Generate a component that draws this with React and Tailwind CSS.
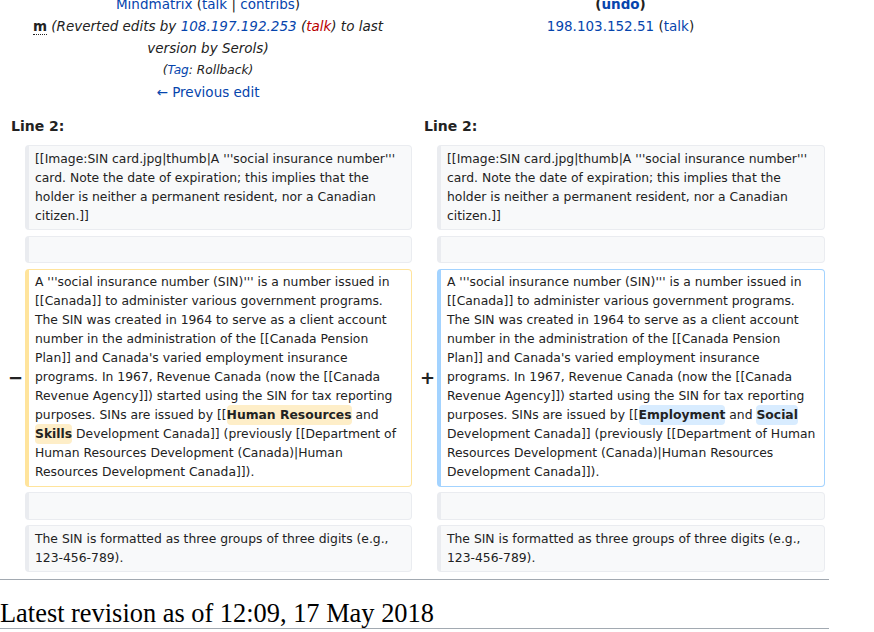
export default function App() {
  const link = "text-[#0645ad]";
  const ctx = "rounded-[4px] border border-l-4 border-[#eaecf0] bg-[#f8f9fa] px-[6px] py-[3.5px] min-h-[27.5px]";
  const del = "rounded-[4px] border border-l-4 border-[#ffe49c] bg-white px-[6px] py-[3.5px]";
  const add = "rounded-[4px] border border-l-4 border-[#a3d3ff] bg-white px-[6px] py-[3.5px]";
  const hlDel = "font-bold bg-[#feeec8] rounded-[4px] py-[3px]";
  const hlAdd = "font-bold bg-[#d8ecff] rounded-[4px] py-[3px]";
  const marker = "flex items-center justify-end pr-[2px] text-[18px] font-bold";

  const first =
    "[[Image:SIN card.jpg|thumb|A '''social insurance number''' card. Note the date of expiration; this implies that the holder is neither a permanent resident, nor a Canadian citizen.]]";
  const last = "The SIN is formatted as three groups of three digits (e.g., 123-456-789).";
  const lead =
    "A '''social insurance number (SIN)''' is a number issued in [[Canada]] to administer various government programs. The SIN was created in 1964 to serve as a client account number in the administration of the [[Canada Pension Plan]] and Canada's varied employment insurance programs. In 1967, Revenue Canada (now the [[Canada Revenue Agency]]) started using the SIN for tax reporting purposes. SINs are issued by [[";
  const tail =
    " Development Canada]] (previously [[Department of Human Resources Development (Canada)|Human Resources Development Canada]]).";

  return (
    <div className="w-[874px] h-[632px] overflow-hidden bg-white text-[#222222] font-['DejaVu_Sans',sans-serif]">
      <div className="w-[829px] -mt-[7.5px]">
        <div className="grid grid-cols-[416px_409px] text-[13.5px] leading-[22px] text-center">
          <div>
            <div>
              <span className={link}>Mindmatrix</span> (<span className={link}>talk</span> |{" "}
              <span className={link}>contribs</span>)
            </div>
            <div>
              <abbr className="font-bold no-underline border-b border-dotted border-[#222222]">m</abbr>{" "}
              <span className="italic">
                (Reverted edits by <span className={link}>108.197.192.253</span> (
                <span className="text-[#ba0000]">talk</span>) to last
                <br />
                version by Serols)
              </span>
            </div>
            <div className="italic text-[12.2px]">
              (<span className={link}>Tag</span>: Rollback)
            </div>
            <div>
              <span className={link}>← Previous edit</span>
            </div>
          </div>
          <div>
            <div className="font-bold">
              (<span className={link}>undo</span>)
            </div>
            <div>
              <span className={link}>198.103.152.51</span> (<span className={link}>talk</span>)
            </div>
          </div>
        </div>

        <div className="grid grid-cols-[412px_413px] mt-[12.5px] text-[14px] leading-[22px] font-bold">
          <div className="pl-[11px]">Line 2:</div>
          <div className="pl-[12px]">Line 2:</div>
        </div>

        <div className="grid grid-cols-[25px_387px_25px_388px] gap-y-[5.6px] mt-[8px] text-[12.35px] leading-[19px]">
          <div />
          <div className={ctx}>{first}</div>
          <div />
          <div className={ctx}>{first}</div>

          <div />
          <div className={ctx} />
          <div />
          <div className={ctx} />

          <div className={marker}>−</div>
          <div className={del}>
            {lead}
            <span className={hlDel}>Human Resources</span> and <span className={hlDel}>Skills</span>
            {tail}
          </div>
          <div className={marker}>+</div>
          <div className={add}>
            {lead}
            <span className={hlAdd}>Employment</span> and <span className={hlAdd}>Social</span>
            {tail}
          </div>

          <div />
          <div className={ctx} />
          <div />
          <div className={ctx} />

          <div />
          <div className={ctx}>{last}</div>
          <div />
          <div className={ctx}>{last}</div>
        </div>

        <div className="mt-[6.7px] border-t border-[#a2a9b1]" />
        <h2 className="mt-[20px] pb-[2px] border-b border-[#a2a9b1] font-['Liberation_Serif',serif] text-[26.4px] leading-[26px] text-[#000000]">
          Latest revision as of 12:09, 17 May 2018
        </h2>
      </div>
    </div>
  );
}
